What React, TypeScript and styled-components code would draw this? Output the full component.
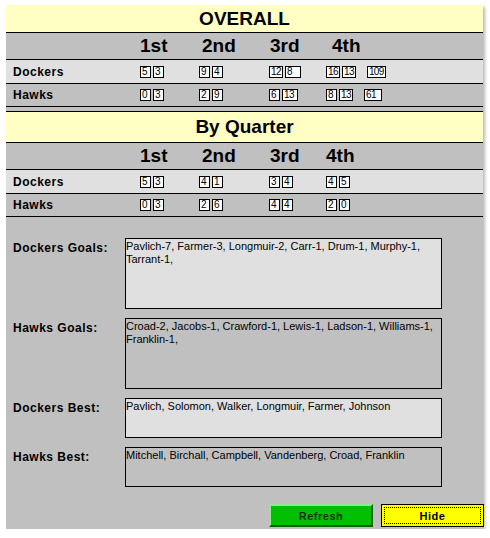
import React from "react";
import styled, { createGlobalStyle } from "styled-components";

const GlobalStyle = createGlobalStyle`
  html, body { margin: 0; padding: 0; background: #ffffff; }
  body { font-family: "Liberation Sans", Arial, sans-serif; color: #000; }
`;

const Page = styled.div`
  padding: 5px 0 0 6px;
  width: 484px;
`;

const Panel = styled.div`
  width: 477px;
  background: #c0c0c0;
  box-shadow: 2px 2px 3px rgba(0, 0, 0, 0.28);
  display: flex;
  flex-direction: column;
`;

const SectionTitle = styled.div<{ $h: number; $top?: boolean }>`
  height: ${(p) => p.$h}px;
  background: #ffffc4;
  border-top: ${(p) => (p.$top ? "1px solid #000" : "none")};
  border-bottom: 1px solid #000;
  display: flex;
  align-items: center;
  justify-content: center;
  font-weight: bold;
  font-size: 19px;
`;

const Grid = "134px 59px 70px 57px 1fr";

const HeaderRow = styled.div`
  display: grid;
  grid-template-columns: ${Grid};
  height: 26px;
  align-items: center;
  border-bottom: 1px solid #000;
  background: #c0c0c0;
`;

const HeaderCell = styled.div<{ $indent: number }>`
  padding-left: ${(p) => p.$indent}px;
  font-weight: bold;
  font-size: 19px;
  line-height: 26px;
`;

const DataRow = styled.div<{ $light?: boolean; $h: number }>`
  display: grid;
  grid-template-columns: ${Grid};
  height: ${(p) => p.$h}px;
  align-items: center;
  border-bottom: 1px solid #000;
  background: ${(p) => (p.$light ? "#e0e0e0" : "#c0c0c0")};
`;

const TeamLabel = styled.div`
  padding-left: 7px;
  font-weight: bold;
  font-size: 12px;
  letter-spacing: 0.5px;
`;

const BoxGroup = styled.div`
  display: flex;
  align-items: center;
`;

const Pair = styled.div`
  display: flex;
  gap: 2px;
`;

const ScoreBox = styled.div<{ $w?: number }>`
  box-sizing: border-box;
  min-width: ${(p) => p.$w ?? 11}px;
  height: 12px;
  border: 1px solid #000;
  background: #fff;
  font-size: 10px;
  line-height: 10px;
  padding: 0 1px 0 1px;
  letter-spacing: -0.6px;
  white-space: nowrap;
`;

const TotalBox = styled(ScoreBox)`
  margin-left: 11px;
`;

const Gap = styled.div`
  height: 4px;
`;

const Details = styled.div`
  display: grid;
  grid-template-columns: 119px 317px;
  row-gap: 9px;
  padding-top: 21px;
`;

const DetailLabel = styled.div`
  padding: 3px 0 0 7px;
  font-weight: bold;
  font-size: 12px;
  letter-spacing: 0.5px;
`;

const DetailBox = styled.div<{ $light?: boolean; $h: number }>`
  box-sizing: border-box;
  height: ${(p) => p.$h}px;
  border: 1px solid #000;
  background: ${(p) => (p.$light ? "#e0e0e0" : "#c0c0c0")};
  font-size: 11px;
  line-height: 13px;
  padding: 1px 2px 0 0;
`;

const ButtonBar = styled.div`
  display: flex;
  justify-content: flex-end;
  gap: 8px;
  padding-top: 17px;
  margin-right: -1px;
  height: 25px;
`;

const Button = styled.button<{ $kind: "green" | "yellow" }>`
  box-sizing: border-box;
  width: ${(p) => (p.$kind === "green" ? 104 : 103)}px;
  height: 23px;
  font-family: "Liberation Sans", Arial, sans-serif;
  font-weight: bold;
  font-size: 11px;
  letter-spacing: 0.5px;
  padding: 0;
  cursor: pointer;
  ${(p) =>
    p.$kind === "green"
      ? `
    background: #00c000;
    color: #003000;
    border: 2px solid;
    border-color: #90e890 #006000 #006000 #90e890;
  `
      : `
    background: #ffff00;
    color: #000;
    border: 1px solid #000;
    outline: 1px dotted #000;
    outline-offset: -4px;
  `}
`;

type Q = [string, string];
type TeamScores = { name: string; q: Q[]; total?: string };

const overall: TeamScores[] = [
  { name: "Dockers", q: [["5", "3"], ["9", "4"], ["12", "8"], ["16", "13"]], total: "109" },
  { name: "Hawks", q: [["0", "3"], ["2", "9"], ["6", "13"], ["8", "13"]], total: "61" },
];

const byQuarter: TeamScores[] = [
  { name: "Dockers", q: [["5", "3"], ["4", "1"], ["3", "4"], ["4", "5"]] },
  { name: "Hawks", q: [["0", "3"], ["2", "6"], ["4", "4"], ["2", "0"]] },
];

const headers = ["1st", "2nd", "3rd", "4th"];

function ScoreTable({ rows, indents }: { rows: TeamScores[]; indents: number[] }) {
  return (
    <>
      <HeaderRow>
        <div />
        {headers.map((h, i) => (
          <HeaderCell key={h} $indent={indents[i]}>
            {h}
          </HeaderCell>
        ))}
      </HeaderRow>
      {rows.map((r, ri) => (
        <DataRow key={r.name} $light={ri === 0} $h={ri === 0 ? 23 : 22}>
          <TeamLabel>{r.name}</TeamLabel>
          {r.q.map((q, qi) => (
            <BoxGroup key={qi}>
              <Pair>
                <ScoreBox>{q[0]}</ScoreBox>
                <ScoreBox $w={qi === 2 && r.total ? 16 : 11}>{q[1]}</ScoreBox>
              </Pair>
              {qi === 3 && r.total && <TotalBox $w={18}>{r.total}</TotalBox>}
            </BoxGroup>
          ))}
        </DataRow>
      ))}
    </>
  );
}

export default function App() {
  return (
    <>
      <GlobalStyle />
      <Page>
        <Panel>
          <SectionTitle $h={27}>OVERALL</SectionTitle>
          <ScoreTable rows={overall} indents={[0, 3, 1, 6]} />
          <Gap />
          <SectionTitle $h={30} $top>
            By Quarter
          </SectionTitle>
          <ScoreTable rows={byQuarter} indents={[0, 3, 1, 0]} />
          <Details>
            <DetailLabel>Dockers Goals:</DetailLabel>
            <DetailBox $light $h={71}>
              Pavlich-7, Farmer-3, Longmuir-2, Carr-1, Drum-1, Murphy-1, Tarrant-1,
            </DetailBox>
            <DetailLabel>Hawks Goals:</DetailLabel>
            <DetailBox $h={71}>
              Croad-2, Jacobs-1, Crawford-1, Lewis-1, Ladson-1, Williams-1, Franklin-1,
            </DetailBox>
            <DetailLabel>Dockers Best:</DetailLabel>
            <DetailBox $light $h={40}>
              Pavlich, Solomon, Walker, Longmuir, Farmer, Johnson
            </DetailBox>
            <DetailLabel>Hawks Best:</DetailLabel>
            <DetailBox $h={40}>Mitchell, Birchall, Campbell, Vandenberg, Croad, Franklin</DetailBox>
          </Details>
          <ButtonBar>
            <Button $kind="green">Refresh</Button>
            <Button $kind="yellow">Hide</Button>
          </ButtonBar>
        </Panel>
      </Page>
    </>
  );
}
